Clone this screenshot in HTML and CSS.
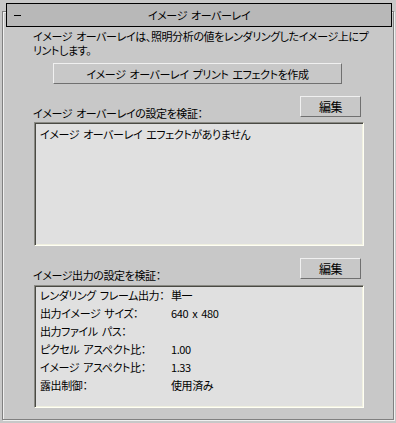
FILE: index.html
```html
<!DOCTYPE html>
<html lang="ja">
<head>
    <meta charset="UTF-8">
    <title>イメージ オーバーレイ</title>
    <link rel="stylesheet" href="styles.css">
</head>
<body>
    <div class="rollout">
        <div class="title-bar">
            <span class="toggle"><i></i></span>
            <span class="title">イメージ オーバーレイ</span>
        </div>
        <div class="content">
            <p class="desc">イメージ オーバーレイは、照明分析の値をレンダリングしたイメージ上にプ<br>リントします。</p>
            <div class="create-btn">イメージ オーバーレイ プリント エフェクトを作成</div>

            <div class="label-row">
                <span>イメージ オーバーレイの設定を検証：</span>
                <div class="edit-btn">編集</div>
            </div>
            <div class="list-box overlay-box">
                <div class="line">イメージ オーバーレイ エフェクトがありません</div>
            </div>

            <div class="label-row">
                <span>イメージ出力の設定を検証：</span>
                <div class="edit-btn">編集</div>
            </div>
            <div class="list-box output-box">
                <div class="row"><span class="key">レンダリング フレーム出力：</span><span>単一</span></div>
                <div class="row"><span class="key">出力イメージ サイズ：</span><span>640 x 480</span></div>
                <div class="row"><span class="key">出力ファイル パス：</span><span></span></div>
                <div class="row"><span class="key">ピクセル アスペクト比：</span><span>1.00</span></div>
                <div class="row"><span class="key">イメージ アスペクト比：</span><span>1.33</span></div>
                <div class="row"><span class="key">露出制御：</span><span>使用済み</span></div>
            </div>
        </div>
    </div>
</body>
</html>
```

FILE: styles.css
```css
body {
    margin: 0;
    background-color: #c8c8c8;
    font-family: "Noto Sans CJK JP", "Liberation Sans", sans-serif;
    font-size: 11px;
    letter-spacing: -0.4px;
    word-spacing: 2px;
    font-feature-settings: "palt";
    color: #000;
}
.rollout {
    margin: 11px 2px 2px 2px;
    height: 407px;
    border: 1px solid #808080;
    box-shadow: inset 1px 1px 0 #f0f0f0, 1px 1px 0 #f0f0f0;
}
.title-bar {
    display: flex;
    align-items: center;
    height: 22px;
    margin: -9px 1px 0 3px;
    background-color: #b8b8b8;
    border: 1px solid #000;
    position: relative;
}
.toggle {
    width: 24px;
    padding-left: 7px;
    box-sizing: border-box;
}
.toggle i {
    display: block;
    width: 7px;
    height: 1px;
    background-color: #000;
}
.title {
    flex: 1;
    text-align: center;
    margin-right: 24px;
}
.content {
    display: flex;
    flex-direction: column;
    padding: 0 29px 0 30px;
}
.desc {
    margin: 2px 0 0 0;
    line-height: 14px;
    white-space: nowrap;
}
.create-btn {
    margin: 6px 0 0 20px;
    width: 289px;
    height: 21px;
    line-height: 20px;
    text-align: center;
    box-sizing: border-box;
    border: 1px solid;
    border-color: #f0f0f0 #707070 #707070 #f0f0f0;
}
.label-row {
    display: flex;
    justify-content: space-between;
    align-items: flex-end;
    margin-top: 12px;
    padding-right: 3px;
}
.label-row span {
    line-height: 14px;
    margin-bottom: -3px;
}
.edit-btn {
    width: 61px;
    height: 21px;
    line-height: 19px;
    font-size: 12px;
    text-align: center;
    box-sizing: border-box;
    border: 1px solid;
    border-color: #f0f0f0 #707070 #707070 #f0f0f0;
}
.list-box {
    margin: 5px 0 0 1px;
    width: 330px;
    box-sizing: border-box;
    background-color: #e0e0e0;
    border: 1px solid;
    border-color: #8a8a84 #fffff4 #fffff4 #8a8a84;
    box-shadow: inset 1px 1px 0 #4a4a44, inset -1px -1px 0 #f0f0e0;
}
.overlay-box {
    height: 124px;
    padding: 3px 5px;
}
.output-box {
    height: 123px;
    padding: 0 5px;
    margin-top: 6px;
}
.row {
    display: flex;
    line-height: 18px;
    white-space: nowrap;
}
.key {
    width: 131px;
}
```
